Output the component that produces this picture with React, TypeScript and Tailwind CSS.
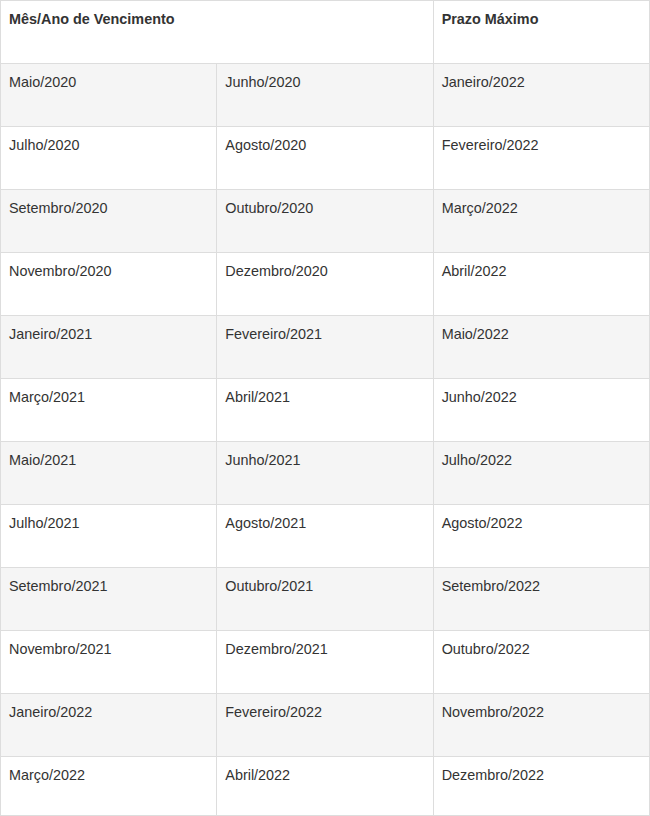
const rows: [string, string, string][] = [
  ['Maio/2020', 'Junho/2020', 'Janeiro/2022'],
  ['Julho/2020', 'Agosto/2020', 'Fevereiro/2022'],
  ['Setembro/2020', 'Outubro/2020', 'Março/2022'],
  ['Novembro/2020', 'Dezembro/2020', 'Abril/2022'],
  ['Janeiro/2021', 'Fevereiro/2021', 'Maio/2022'],
  ['Março/2021', 'Abril/2021', 'Junho/2022'],
  ['Maio/2021', 'Junho/2021', 'Julho/2022'],
  ['Julho/2021', 'Agosto/2021', 'Agosto/2022'],
  ['Setembro/2021', 'Outubro/2021', 'Setembro/2022'],
  ['Novembro/2021', 'Dezembro/2021', 'Outubro/2022'],
  ['Janeiro/2022', 'Fevereiro/2022', 'Novembro/2022'],
  ['Março/2022', 'Abril/2022', 'Dezembro/2022'],
];

const cell = 'border border-[#dddddd] px-2 pt-[8px] align-top text-left';

export default function App() {
  return (
    <div className="w-[650px] bg-white font-['Liberation_Sans',Arial,sans-serif] text-[14.4px] leading-5 text-[#333333]">
      <table className="w-full table-fixed border-collapse">
        <colgroup>
          <col className="w-1/3" />
          <col className="w-1/3" />
          <col className="w-1/3" />
        </colgroup>
        <thead>
          <tr className="h-[63px] bg-white">
            <th colSpan={2} className={`${cell} font-bold`}>
              Mês/Ano de Vencimento
            </th>
            <th className={`${cell} font-bold`}>Prazo Máximo</th>
          </tr>
        </thead>
        <tbody>
          {rows.map((r, i) => (
            <tr
              key={i}
              className={`${i === rows.length - 1 ? 'h-[59px]' : 'h-[63px]'} ${i % 2 === 0 ? 'bg-[#f5f5f5]' : 'bg-white'}`}
            >
              {r.map((c, j) => (
                <td key={j} className={cell}>
                  {c}
                </td>
              ))}
            </tr>
          ))}
        </tbody>
      </table>
    </div>
  );
}
